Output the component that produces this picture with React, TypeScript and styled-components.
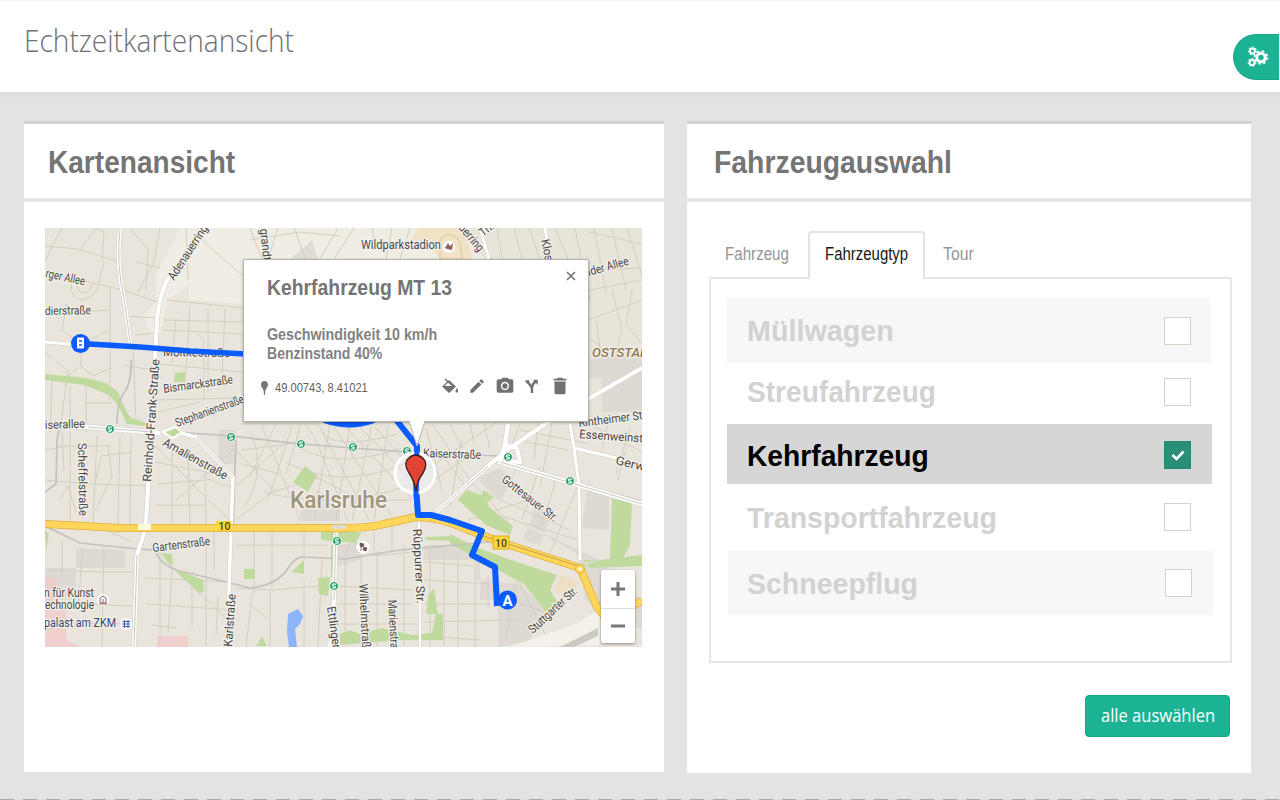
import React from 'react';
import styled, { createGlobalStyle } from 'styled-components';
import { MdEdit, MdDelete, MdPhotoCamera } from 'react-icons/md';

const GlobalStyle = createGlobalStyle`
  * { box-sizing: border-box; }
  body { margin: 0; background: #e3e3e3; font-family: "Liberation Sans", Arial, sans-serif; overflow: hidden; }
`;

const Page = styled.div`
  height: 800px;
  display: flex;
  flex-direction: column;
  background: #e3e3e3;
`;
const TopBar = styled.header`
  height: 98px;
  flex: none;
  display: flex;
  justify-content: space-between;
  background: #fff;
  border-top: 1px solid #f6f6f6;
  border-bottom: 6px solid #dfe0e0;
`;
const Squeeze = styled.span<{ $x: number }>`
  display: inline-block;
  white-space: nowrap;
  transform: scaleX(${p => p.$x});
  transform-origin: 0 50%;
`;
const Title = styled.h1`
  margin: 17px 0 0 24px;
  font: 300 31px/44px "Open Sans", sans-serif;
  color: #6d7171;
`;
const SettingsTab = styled.button`
  margin: 33px 1px 0 0;
  width: 46px;
  height: 46px;
  padding: 0 0 0 13px;
  border: 1px solid #12a987;
  border-right: 0;
  border-radius: 23px 0 0 23px;
  background: #1bb394;
  color: #fff;
  display: flex;
  align-items: center;
`;
const Columns = styled.main`
  flex: 1;
  display: flex;
  align-items: flex-start;
  gap: 23px;
  padding: 23px 0 0 24px;
`;
const Card = styled.section<{ $w: number; $h: number }>`
  width: ${p => p.$w}px;
  height: ${p => p.$h}px;
  background: #fff;
  border-top: 3px solid #d1d1d1;
`;
const CardHead = styled.h2<{ $pad: number }>`
  margin: 0;
  height: 78px;
  padding: 0 0 0 ${p => p.$pad}px;
  border-bottom: 4px solid #e5e5e5;
  font-size: 30.5px;
  line-height: 76px;
  color: #757575;
`;
const MapFrame = styled.div`
  position: relative;
  width: 597px;
  height: 419px;
  margin: 26px 0 0 21px;
  > svg { display: block; }
`;
const Popup = styled.div`
  position: absolute;
  left: 198px;
  top: 31px;
  width: 346px;
  height: 163px;
  padding: 10px 18px 0 23px;
  background: #fff;
  border: 1px solid #b5b2ab;
  border-radius: 2px;
  box-shadow: 0 1px 3px rgba(0, 0, 0, 0.3);
  color: #757575;
`;
const PopupHead = styled.div`
  display: flex;
  justify-content: space-between;
  height: 55px;
  font-weight: bold;
  font-size: 22px;
  line-height: 36px;
`;
const CloseIcon = styled.svg`
  margin: 1px -6px 0 0;
`;
const PopupFacts = styled.div`
  font-weight: bold;
  font-size: 16.5px;
  line-height: 19px;
  color: #828282;
  display: flex;
  flex-direction: column;
`;
const PopupFoot = styled.div`
  display: flex;
  align-items: center;
  height: 26px;
  margin: 12px 0 0 -7px;
  font-size: 12.5px;
  color: #606060;
`;
const Coordinates = styled.div`
  flex: 1;
  padding-left: 6px;
`;
const Actions = styled.div`
  display: flex;
  align-items: center;
  gap: 9px;
  margin: -4px -1px 0 0;
  color: #717171;
`;
const ZoomControl = styled.div`
  position: absolute;
  left: 556px;
  top: 342px;
  width: 34px;
  height: 73px;
  background: #fff;
  border-radius: 2px;
  box-shadow: 0 1px 3px rgba(0, 0, 0, 0.4);
  display: flex;
  flex-direction: column;
`;
const ZoomButton = styled.div<{ $h: number }>`
  height: ${p => p.$h}px;
  display: flex;
  align-items: center;
  justify-content: center;
  & + & { border-top: 1px solid #ddd; }
`;
const Tabs = styled.nav`
  display: flex;
  height: 48px;
  margin: 29px 0 -2px 22px;
  position: relative;
`;
const Tab = styled.div<{ $w: number; $pad: number; $active?: boolean }>`
  width: ${p => p.$w}px;
  padding-left: ${p => p.$pad}px;
  border: solid ${p => (p.$active ? '#e3e3e3' : 'transparent')};
  border-width: 2px 2px 0;
  border-radius: 4px 4px 0 0;
  background: ${p => (p.$active ? '#fff' : 'transparent')};
  color: ${p => (p.$active ? '#161616' : '#959595')};
  font-size: 17.5px;
  line-height: 42px;
`;
const TypeList = styled.div`
  width: 523px;
  height: 386px;
  margin-left: 22px;
  padding: 19px 0 0 15px;
  border: 2px solid #e6e6e6;
`;
const TypeRow = styled.label<{ $h: number; $x: number; $shift: number; $bg?: string; $active?: boolean }>`
  display: flex;
  justify-content: space-between;
  align-items: center;
  width: 485px;
  height: ${p => p.$h}px;
  margin-left: ${p => p.$x}px;
  padding: ${p => Math.max(p.$shift, 0)}px 20px ${p => Math.max(-p.$shift, 0)}px ${p => 21 - p.$x}px;
  background: ${p => p.$bg ?? '#fff'};
  color: ${p => (p.$active ? '#000' : '#d2d2d2')};
  font-size: 30px;
  font-weight: bold;
`;
const TypeName = styled.span<{ $drop: number }>`
  padding-top: ${p => p.$drop}px;
`;
const CheckBox = styled.span<{ $on?: boolean; $dx: number }>`
  flex: none;
  width: 27px;
  height: 28px;
  margin-right: ${p => p.$dx}px;
  border: 1.5px solid ${p => (p.$on ? '#23896f' : '#d6d2cb')};
  background: ${p => (p.$on ? '#2a8f78' : '#fff')};
  display: flex;
  align-items: center;
  justify-content: center;
`;
const CardFoot = styled.footer`
  display: flex;
  justify-content: flex-end;
  padding: 32px 21px 0 0;
`;
const SelectAll = styled.button`
  width: 145px;
  height: 42px;
  padding: 0 0 2px 15px;
  border: 1px solid #14a687;
  border-radius: 4px;
  background: #1bb394;
  color: #fff;
  text-align: left;
  font: 500 17.5px/38px "Open Sans", sans-serif;
`;
const BottomRule = styled.div`
  height: 1px;
  flex: none;
  background: repeating-linear-gradient(90deg, #aaa 0 14px, #ddd 14px 23px);
`;

const MapText = styled.text`
  font-family: Roboto, sans-serif;
  paint-order: stroke;
  stroke: #f3f0ea;
  stroke-width: 2.5px;
  stroke-linejoin: round;
`;

type LabelProps = { x: number; y: number; len: number; rot?: number; size?: number; fill?: string; weight?: number; italic?: boolean; children: string };
function Label({ x, y, len, rot = 0, size = 12, fill = '#484848', weight = 400, italic, children }: LabelProps) {
  return (
    <MapText x={x} y={y} textLength={len} lengthAdjust="spacingAndGlyphs" fontSize={size} fill={fill} fontWeight={weight}
      fontStyle={italic ? 'italic' : 'normal'} transform={`rotate(${rot} ${x} ${y})`}>{children}</MapText>
  );
}

const minorRoads = [
  'M45 246 L78 249 L119 262', 'M62 228 L52 246 L45 262', 'M81 249 L96 228', 'M96 228 L104 232 L102 262', 'M45 272 L93 283 L123 290 L157 302',
  'M71 284 Q70 298 82 300 Q96 298 99 283 L104 262', 'M77 284 Q78 293 84 293 Q91 292 92 283', 'M67 304 L62 330 L81 344', 'M48 314 L110 310', 'M110 288 V400',
  'M45 352 L68 371 L60 430', 'M81 344 V366 L68 376', 'M81 366 L93 376 L110 368', 'M81 344 L110 330', 'M75 344 L55 344', 'M52 380 L50 432', 'M70 386 V424', 'M86 384 V432', 'M86 403 H112',
  'M135 335 L157 333', 'M124 316 L157 318', 'M137 262 L160 268', 'M130 228 L148 250 L146 290', 'M160 228 L154 262 L138 292', 'M186 228 L188 280', 'M197 228 L205 243 L243 276',
  'M167 300 L243 308', 'M190 306 L186 372', 'M208 308 V392', 'M225 308 L222 380', 'M162 330 L243 334', 'M163 320 L243 322', 'M158 364 L243 372', 'M176 318 L172 364', 'M198 334 L204 340 V400',
  'M126 366 L156 370', 'M133 346 L136 424', 'M156 400 L243 398', 'M158 412 L200 402',
  'M250 228 L262 259', 'M278 228 L268 259', 'M294 228 L306 259', 'M338 228 L320 259', 'M354 228 L334 259', 'M372 228 L374 240', 'M392 228 L386 259', 'M410 228 L400 259',
  'M250 240 L300 232 L340 236', 'M466 228 L492 259', 'M497 228 L502 259', 'M514 228 L522 259', 'M529 228 L540 259', 'M555 228 L568 259', 'M575 228 L590 300', 'M594 228 L606 292', 'M612 228 L626 290', 'M627 228 L642 276',
  'M589 232 L642 244', 'M589 290 L642 280', 'M589 320 L642 300', 'M596 320 L600 350', 'M612 290 L622 330 L616 354', 'M632 290 L626 324 L642 344', 'M589 338 L608 352', 'M595 270 L642 268',
  'M45 450 L68 446', 'M62 432 L64 470', 'M70 432 V524', 'M97 436 L93 524', 'M108 446 L112 476 L96 510', 'M120 436 L118 524', 'M131 436 L130 524', 'M60 500 L68 486 L76 512', 'M45 480 L92 484 L150 486', 'M56 446 H110',
  'M95 484 L101 456 L132 452', 'M155 462 L216 474', 'M158 484 L205 480', 'M155 505 H206', 'M172 448 L172 524', 'M188 452 L190 524', 'M205 470 L206 524', 'M152 442 L198 490 L232 522', 'M176 500 L233 450', 'M236 450 L276 492', 'M236 486 L288 440', 'M205 478 L232 488', 'M236 520 L272 492 L318 478 L360 500 L412 500',
  'M110 532 L132 542', 'M62 540 V572', 'M82 548 L79 602', 'M104 545 L102 647', 'M45 570 L100 572 L140 572', 'M45 602 L133 606', 'M45 622 L134 624', 'M160 550 V647', 'M172 570 L168 632', 'M192 572 V628', 'M206 546 V646', 'M145 578 L230 582', 'M146 604 L233 610', 'M162 558 L233 625', 'M152 625 L176 628', 'M214 530 V570', 'M218 596 L216 636',
  'M240 424 L318 424', 'M250 432 Q268 470 244 508', 'M262 426 L300 520', 'M276 424 L250 476', 'M292 426 L268 500', 'M306 424 L316 440 L348 521', 'M318 424 L370 521', 'M334 427 L392 516', 'M346 427 L411 498', 'M360 427 L411 480', 'M375 427 L404 460', 'M301 424 L286 474', 'M322 430 Q330 452 398 434', 'M300 448 Q338 470 402 448', 'M286 462 Q340 492 408 462', 'M264 492 Q338 512 412 484', 'M330 424 L314 521', 'M350 424 L336 521', 'M372 424 L352 521', 'M388 426 L374 521', 'M242 450 L290 444', 'M242 464 L280 474',
  'M236 545 H328', 'M254 530 V594', 'M272 530 V588', 'M304 530 V560', 'M304 580 V647', 'M322 560 L318 647', 'M236 588 L272 590 L330 585', 'M270 590 V647', 'M252 594 L246 647', 'M336 586 L412 590', 'M345 560 V647', 'M361 555 V647', 'M377 550 V647', 'M404 545 V647', 'M338 604 H412', 'M338 624 H420', 'M374 530 V556 L412 552', 'M392 523 V552', 'M355 530 L345 556', 'M250 604 L268 620',
  'M426 428 L442 490', 'M432 424 L470 480 L508 521', 'M450 424 L462 448', 'M470 424 L474 442', 'M484 424 L490 448', 'M426 470 L500 420', 'M428 484 L470 455', 'M440 452 L476 500', 'M462 440 L450 506', 'M520 424 L512 444', 'M538 424 L534 460', 'M552 424 L540 486', 'M520 462 L500 500', 'M540 466 L522 520', 'M558 474 L540 530', 'M580 480 L548 558', 'M476 508 L578 540', 'M468 520 L528 500', 'M518 440 L568 450', 'M520 430 L590 444', 'M590 424 L642 452', 'M608 424 L602 450', 'M625 452 L618 480', 'M580 484 L640 500', 'M630 428 L616 474', 'M500 500 L570 530', 'M578 540 V560',
  'M422 548 L450 545 L470 550', 'M424 562 L474 566', 'M424 580 L490 584', 'M430 548 V647', 'M444 548 V647', 'M458 556 V647', 'M475 570 V647', 'M488 576 V608', 'M424 604 H490', 'M424 622 L520 620', 'M508 560 L548 640', 'M424 636 L480 640', 'M498 560 L560 610', 'M520 570 L512 600 L550 614', 'M512 600 L506 640',
];

const whiteRoads: [string, number][] = [
  ['M120 228 Q116 266 124 298 L131 348', 4], ['M206 224 Q196 246 170 276 Q160 290 157 320 L155 360 L151 442 L146 520 L144 533 L137 555 L134 647', 4],
  ['M45 342 L80 345', 3], ['M45 427 L88 427 L160 433', 4.5], ['M176 432 L196 437 L233 477 L231 527 L229 590 L227 647', 3.5],
  ['M336 528 L334 600 L330 647', 4], ['M345 530 Q365 531 382 526', 3], ['M436 512 L488 466 L510 448 L545 424 L642 368', 4], ['M508 424 L505 445 L500 462 L575 484 L642 504', 4.5],
  ['M505 445 L517 448 L520 462 L504 461', 4], ['M570 424 L574 448 L579 485 L580 560', 3], ['M574 448 L642 464', 3], ['M418 446 L417 516', 2.5], ['M419 516 L420 647', 2], ['M480 228 L489 259', 3],
  ['M264 228 L268 259', 3], ['M545 228 L550 259', 3],
];

const stops: [number, number][] = [[110, 429], [231, 437], [301, 444], [353, 447], [407, 451], [508, 457], [570, 481], [337, 541], [334, 586]];

function CityMap() {
  return (
    <svg width="597" height="419" viewBox="45 228 597 419" fill="none">
      <rect x="45" y="228" width="597" height="419" fill="#e9e5dc" />
      <path d="M205 228 H642 V290 H590 V259 H243 V304 L189 300 V284 L168 300 L157 346 L143 316 L156 302 L156 274 L180 228Z" fill="#f0ede5" />
      <path d="M455 228 H642 V424 H589 V259 H485Z" fill="#e8e4da" />
      <path d="M418 228 H462 L474 259 H440 L424 242 H410Z" fill="#f1e2c6" />
      <path d="M440 240 Q450 228 460 242 L462 259 H440Z" stroke="#e2cfab" strokeWidth="1.5" />
      <path d="M45 568 H76 V548 L125 550 V568 H76 V600 H45Z M290 259 L312 240 L318 259Z M300 510 L318 490 L340 504 V521 H300Z M336 545 L362 542 L360 560 L337 566Z M477 478 L500 468 L512 480 L498 500Z M523 540 L536 506 L552 514 L540 545Z M588 484 L609 492 V530 L582 528Z M589 360 L642 350 V412 H602 V378 H589Z M218 430 H236 V464 H218Z M506 515 L578 554 L585 600 L642 630 V600 L600 560Z M424 545 H472 L476 580 L520 584 L545 610 L530 640 L500 647 H498 V600 H480 V560 H424Z" fill="#dcd8d1" opacity=".85" />
      <path d="M45 600 L66 605 V640 L80 647 H45Z M157 636 H188 V647 H157Z M45 578 H56 V602 H45Z" fill="#f1c9c9" opacity=".8" />
      <g stroke="#d3cec3" strokeWidth="1">{minorRoads.map(d => <path key={d} d={d} />)}</g>
      <g fill="#c0da9e">
        <path d="M45 374 L86 378 L106 383 L118 392 Q124 408 131 418 L147 423 L146 426 L127 424 Q117 400 107 394 L84 385 L45 380Z" />
        <path d="M175 373 L186 372 L185 382 L174 382Z M305 466 L317 476 L308 492 L293 482Z M321 531 L362 531 L356 543 L321 540Z M291 572 L304 560 V574Z M244 569 H255 V579 H244Z M318 578 L330 577 L328 596 L319 594Z M331 545 L334 545 V577 H331Z M114 529 L119 530 L118 534Z M161 553 L172 554 L173 566 L168 562Z M172 568 L203 580 L204 591 L200 594 L188 582Z M45 530 L49 534 L46 552Z M262 636 L267 646 H256Z" />
        <path d="M340 634 L350 630 L360 634 L382 628 L412 635 L432 633 L436 614 H426 L428 596 L434 588 L438 614 H443 V640 L400 640 L340 645Z M426 537 L455 536 V541 L426 540Z" />
        <path d="M466 490 L484 496 L490 508 L513 526 L510 535 L486 525 L458 500Z M484 490 L494 497 L488 502 L480 498Z M450 534 L476 547 L505 558 L557 575 L550 590 L560 606 L548 615 L524 584 L492 567 L450 543Z M612 498 L632 502 L630 545 L622 560 H584 V566 L600 560 H610Z M582 562 L642 555 V566 L590 568Z" />
      </g>
      <path d="M560 575 L578 582 L572 598 L554 592Z" fill="#eddfc4" />
      <path d="M510 647 L575 624 L600 610 V645Z" fill="#f4f1ea" />
      <path d="M598 628 L598 636 L574 647 H560Z" fill="#ccc8c2" />
      <path d="M288 614 L298 609 L303 616 L300 624 L295 629 L297 647 L289 647 L287 632Z" fill="#8cb4fb" />
      <g stroke="#c3c1be" strokeWidth="1.7">
        <path d="M45 526 L80 543 L138 549 L155 550 Q160 566 180 571 L218 580 L250 588 Q278 585 288 568 Q296 556 304 557 L345 559 L400 550 L500 541" />
        <path d="M45 492 L56 484 L57 440 L60 424 M175 432 L232 436 L300 444 L420 453 L500 456 M131 360 Q132 378 126 390 Q117 400 117 424 M236 440 L233 530" />
      </g>
      {whiteRoads.map(([d, w]) => <path key={d} d={d} stroke="#d2cec6" strokeWidth={w + 1} />)}
      {whiteRoads.map(([d, w]) => <path key={d} d={d} stroke="#fff" strokeWidth={w} />)}
      <path d="M120 228 Q116 266 124 298 L131 348 M88 427 L154 432 M500 462 L575 484 L642 504 M137 555 L134 647 M336 528 L334 600 M196 437 L233 477 M436 512 L488 466" stroke="#c8c6c2" />
      <path d="M163 432 L175 427 L182 432 L173 438Z" stroke="#fff" strokeWidth="2" fill="#c0da9e" />
      <g strokeLinejoin="round">
        <path d="M45 524 L84 526 L118 528 H330 Q365 529 384 524 L416 517 Q440 517 466 529 L500 542 L580 568 L597 607 L606 618 L642 601" stroke="#dcae40" strokeWidth="8" />
        <path d="M45 524 L84 526 L118 528 H330 Q365 529 384 524 L416 517 Q440 517 466 529 L500 542 L580 568 L597 607 L606 618 L642 601" stroke="#ffd659" strokeWidth="6.5" />
        <path d="M480 535 L578 566" stroke="#c9a64d" strokeWidth="1.2" />
      </g>
      <path d="M138 527 H151" stroke="#fff8dc" strokeWidth="6" /><path d="M332 527 H346" stroke="#dedad2" strokeWidth="4" />
      <circle cx="580" cy="569" r="4.5" fill="#ffd659" stroke="#dcae40" /><circle cx="580" cy="569" r="1.8" fill="#fff" />
      <rect x="216" y="521" width="15" height="10" fill="#fdd736" /><Badge x={224.5} y={530} />
      <rect x="493" y="536" width="16" height="13" fill="#fdd736" stroke="#d8ad20" /><Badge x={501} y={546.5} />

      {stops.map(([x, y]) => (
        <g key={`${x}-${y}`}>
          <circle cx={x} cy={y} r="4.3" fill="#159a5b" stroke="#fff" strokeWidth=".8" />
          <path d={`M${x + 2} ${y - 1.6} Q${x - 2} ${y - 3} ${x - 1.6} ${y - .5} L${x + 1.6} ${y + .8} Q${x + 1.4} ${y + 2.8} ${x - 2} ${y + 1.8}`} stroke="#fff" strokeWidth="1.2" />
        </g>
      ))}

      <Label x={45} y={277} len={40} rot={12}>rger Allee</Label>
      <Label x={45} y={315} len={46} rot={-1}>dierstraße</Label>
      <Label x={174} y={281} len={63} rot={-57}>Adenauerring</Label>
      <Label x={163} y={356} len={67} rot={1}>Moltkestraße</Label>
      <Label x={164} y={393} len={70} rot={-8}>Bismarckstraße</Label>
      <Label x={177} y={427} len={72} rot={-20}>Stephanienstraße</Label>
      <Label x={45} y={429} len={40} rot={-2}>iserallee</Label>
      <Label x={151} y={482} len={123} rot={-86}>Reinhold-Frank-Straße</Label>
      <Label x={162} y={445} len={72} rot={29}>Amalienstraße</Label>
      <Label x={78} y={443} len={73} rot={89}>Scheffelstraße</Label>
      <Label x={153} y={552} len={58} rot={-7}>Gartenstraße</Label>
      <Label x={232} y={647} len={53} rot={-86}>Karlstraße</Label>
      <Label x={361} y={249} len={80}>Wildparkstadion</Label>
      <Label x={260} y={229} len={32} rot={84}>grandt</Label>
      <Label x={458} y={228} len={32} rot={50}>derring</Label>
      <Label x={483} y={237} len={16} rot={-38}>Thr</Label>
      <Label x={541} y={240} len={28} rot={78}>Klose</Label>
      <Label x={589} y={276} len={42} rot={-16}>lder Allee</Label>
      <Label x={592} y={357} len={64} size={12.5} fill="#8c7852" weight={500} italic>OSTSTADT</Label>
      <Label x={579} y={427} len={70} rot={-7}>Rintheimer Str.</Label>
      <Label x={579} y={438} len={70} rot={4}>Essenweinstr.</Label>
      <Label x={615} y={464} len={40} rot={14}>Gerwig</Label>
      <Label x={423} y={457} len={58} rot={2}>Kaiserstraße</Label>
      <Label x={501} y={481} len={67} rot={38}>Gottesauer Str.</Label>
      <Label x={413} y={529} len={75} rot={87}>Rüppurrer Str.</Label>
      <Label x={359} y={584} len={70} rot={87}>Wilhelmstraße</Label>
      <Label x={388} y={600} len={60} rot={87}>Marienstraße</Label>
      <Label x={327} y={607} len={52} rot={82}>Ettlinger S</Label>
      <Label x={533} y={634} len={62} rot={-43}>Stuttgarter Str.</Label>
      <Label x={290} y={508} len={97} size={23} fill="#a0957c" weight={500}>Karlsruhe</Label>
      <Label x={44} y={597} len={50}>n für Kunst</Label>
      <Label x={45} y={609} len={49}>echnologie</Label>
      <Label x={44} y={627} len={72} fill="#394379">palast am ZKM</Label>
      <circle cx="103" cy="600" r="6" fill="#fff" /><path d="M100 598 L103 596 L106 598 V603 H100Z M99.5 604 H107 M103 599 V603" stroke="#8c6060" />
      <circle cx="126" cy="624" r="6" fill="#fff" /><path d="M122.500 621.500 H130 M122 624 H130 M122.500 626.500 H130 M124.500 620 V628 M128 620 V628" stroke="#4d64bd" strokeWidth="1.2" />
      <circle cx="449" cy="247" r="6" fill="#fff" /><path d="M445 248 L448 243 L450 246 L453 243 L452 250 L447 249Z" fill="#8d6260" />
      <circle cx="363" cy="547" r="6.5" fill="#fff" /><path d="M360 543 L364 544 L363 547 L360 546Z M364 547 L367 548 L366 551 L363 550Z M361 543 V551" fill="#725656" stroke="#725656" strokeWidth=".8" />

      <g stroke="#0b5cff" strokeWidth="6" strokeLinejoin="round">
        <path d="M81 343.500 L140 347 L190 351 L246 354" strokeWidth="5.5" />
        <path d="M324 420 Q350 429 374 420 M393 416 L417 446 L416 486 L418 515 L431 515 L450 520 L482 531 L472 555 L495 567 L497 606" />
      </g>
      <circle cx="415" cy="473" r="20" fill="#f0f3ff" fillOpacity=".45" stroke="#fff" strokeWidth="3" />
      <path d="M417 446 L416 494 L418 515" stroke="#0b5cff" strokeWidth="5" />
      <path d="M416 491 Q414 480 409 473 Q404 465 407 460 Q411 455 416 455 Q422 456 425 461 Q427 466 423 473 Q417 481 416 491Z" fill="#e04434" stroke="#401814" strokeWidth="1.3" />
      <circle cx="80.500" cy="343.500" r="9.500" fill="#0b5cff" /><rect x="77" y="337.500" width="7" height="11" rx="1" fill="#fff" /><path d="M79 341 H82 M79 345 H82" stroke="#0b5cff" strokeWidth="1.500" />
      <circle cx="507.500" cy="600" r="9.500" fill="#0b5cff" />
      <text x="507.500" y="605.500" textAnchor="middle" fontFamily="Roboto, sans-serif" fontSize="15" fontWeight="700" fill="#fff">A</text>
    </svg>
  );
}
function Badge({ x, y }: { x: number; y: number }) {
  return <text x={x} y={y} textAnchor="middle" fontFamily="Roboto, sans-serif" fontSize="10.5" fontWeight="500" fill="#4a431c">10</text>;
}

const PopupTail = styled.svg`
  position: absolute;
  left: 164px;
  top: 160px;
`;

function Gear({ x, y, r, w, teeth }: { x: number; y: number; r: number; w: number; teeth: number }) {
  const outer = r + w * 0.75;
  const step = (2 * Math.PI * outer) / teeth;
  return (
    <g fill="none" stroke="currentColor">
      <circle cx={x} cy={y} r={r} strokeWidth={w} />
      <circle cx={x} cy={y} r={outer} strokeWidth={w * 0.55} strokeDasharray={`${step * 0.5} ${step * 0.5}`} />
    </g>
  );
}

function VehiclePopup() {
  return (
    <Popup>
      <PopupHead>
        <Squeeze $x={0.88}>Kehrfahrzeug MT 13</Squeeze>
        <CloseIcon width="10" height="10" viewBox="0 0 10 10"><path d="M1 1 L9 9 M9 1 L1 9" stroke="#777" strokeWidth="1.7" /></CloseIcon>
      </PopupHead>
      <PopupFacts>
        <Squeeze $x={0.863}>Geschwindigkeit 10 km/h</Squeeze>
        <Squeeze $x={0.85}>Benzinstand 40%</Squeeze>
      </PopupFacts>
      <PopupFoot>
        <svg width="9" height="14" viewBox="0 0 9 14"><path d="M4.500 0 Q8 0 8 4 Q8 6 5.500 9 L5 14 H4 L3.500 9 Q1 6 1 4 Q1 0 4.500 0Z" fill="#777" /></svg>
        <Coordinates><Squeeze $x={0.89}>49.00743, 8.41021</Squeeze></Coordinates>
        <Actions>
          <svg width="17" height="16" viewBox="0 0 17 16" fill="none"><path d="M3 1 L12 9" stroke="currentColor" strokeWidth="1.5" /><path d="M7 3 L1 8.500 L7 14 L13 8.500Z" stroke="currentColor" strokeWidth="1.3" /><path d="M1 8 H13.500 L7 14.500Z M14.800 10 Q17 13 15.500 14.500 H14 Q12.800 13 14.800 10Z" fill="currentColor" /></svg>
          <MdEdit size={18} />
          <MdPhotoCamera size={20} />
          <svg width="16" height="18" viewBox="0 0 18 18" fill="none"><path d="M9 17 V11 L4 4 M9 11 Q9 7 13 4" stroke="currentColor" strokeWidth="2.700" /><path d="M10 2 H15.500 V8Z M1 3 L6 2 L4 7Z" fill="currentColor" /></svg>
          <MdDelete size={22} />
        </Actions>
      </PopupFoot>
      <PopupTail width="19" height="28" viewBox="0 0 19 28"><path d="M1 1 L9 26 L17 1" fill="#fff" stroke="#b5b2ab" /><path d="M1 0 H17" stroke="#fff" strokeWidth="2" /></PopupTail>
    </Popup>
  );
}

const types = [
  { name: 'Müllwagen', h: 65, bg: '#f7f7f7', x: 0, s: 0.957, shift: 0, dx: 0, drop: 1 },
  { name: 'Streufahrzeug', h: 61, x: 0, s: 0.937, shift: -3, dx: 0, drop: 0 },
  { name: 'Kehrfahrzeug', h: 60, bg: '#d6d6d6', x: 1, s: 0.94, shift: 2, dx: 1, drop: 2, on: true },
  { name: 'Transportfahrzeug', h: 67, x: 0, s: 0.949, shift: -1, dx: 0, drop: 2 },
  { name: 'Schneepflug', h: 64, bg: '#f7f7f7', x: 2, s: 0.95, shift: 0, dx: 1, drop: 2 },
];

export default function App() {
  return (
    <Page>
      <GlobalStyle />
      <TopBar>
        <Title><Squeeze $x={0.906}>Echtzeitkartenansicht</Squeeze></Title>
        <SettingsTab>
          <svg width="22" height="22" viewBox="0 0 22 22">
            <Gear x={14} y={11.5} r={4.2} w={3} teeth={8} />
            <Gear x={5.500} y={5} r={2.500} w={1.900} teeth={7} />
            <Gear x={5} y={16.500} r={2.500} w={1.900} teeth={7} />
          </svg>
        </SettingsTab>
      </TopBar>
      <Columns>
        <Card $w={640} $h={651}>
          <CardHead $pad={24}><Squeeze $x={0.92}>Kartenansicht</Squeeze></CardHead>
          <MapFrame>
            <CityMap />
            <VehiclePopup />
            <ZoomControl>
              <ZoomButton $h={38}><svg width="14" height="14" viewBox="0 0 14 14"><path d="M7 0 V14 M0 7 H14" stroke="#777" strokeWidth="3" /></svg></ZoomButton>
              <ZoomButton $h={35}><svg width="14" height="14" viewBox="0 0 14 14"><path d="M0 7 H14" stroke="#777" strokeWidth="3" /></svg></ZoomButton>
            </ZoomControl>
          </MapFrame>
        </Card>
        <Card $w={564} $h={652}>
          <CardHead $pad={27}><Squeeze $x={0.93}>Fahrzeugauswahl</Squeeze></CardHead>
          <Tabs>
            <Tab $w={99} $pad={14}><Squeeze $x={0.865}>Fahrzeug</Squeeze></Tab>
            <Tab $w={117} $pad={15} $active><Squeeze $x={0.855}>Fahrzeugtyp</Squeeze></Tab>
            <Tab $w={80} $pad={16}><Squeeze $x={0.9}>Tour</Squeeze></Tab>
          </Tabs>
          <TypeList>
            {types.map(t => (
              <TypeRow key={t.name} $h={t.h} $x={t.x} $shift={t.shift} $bg={t.bg} $active={t.on}>
                <TypeName $drop={t.drop}><Squeeze $x={t.s}>{t.name}</Squeeze></TypeName>
                <CheckBox $on={t.on} $dx={t.dx}>
                  {t.on && <svg width="14" height="11" viewBox="0 0 14 11" fill="none"><path d="M1.500 5 L5.500 9 L12.500 1.500" stroke="#fff" strokeWidth="2.600" /></svg>}
                </CheckBox>
              </TypeRow>
            ))}
          </TypeList>
          <CardFoot><SelectAll><Squeeze $x={0.945}>alle auswählen</Squeeze></SelectAll></CardFoot>
        </Card>
      </Columns>
      <BottomRule />
    </Page>
  );
}
